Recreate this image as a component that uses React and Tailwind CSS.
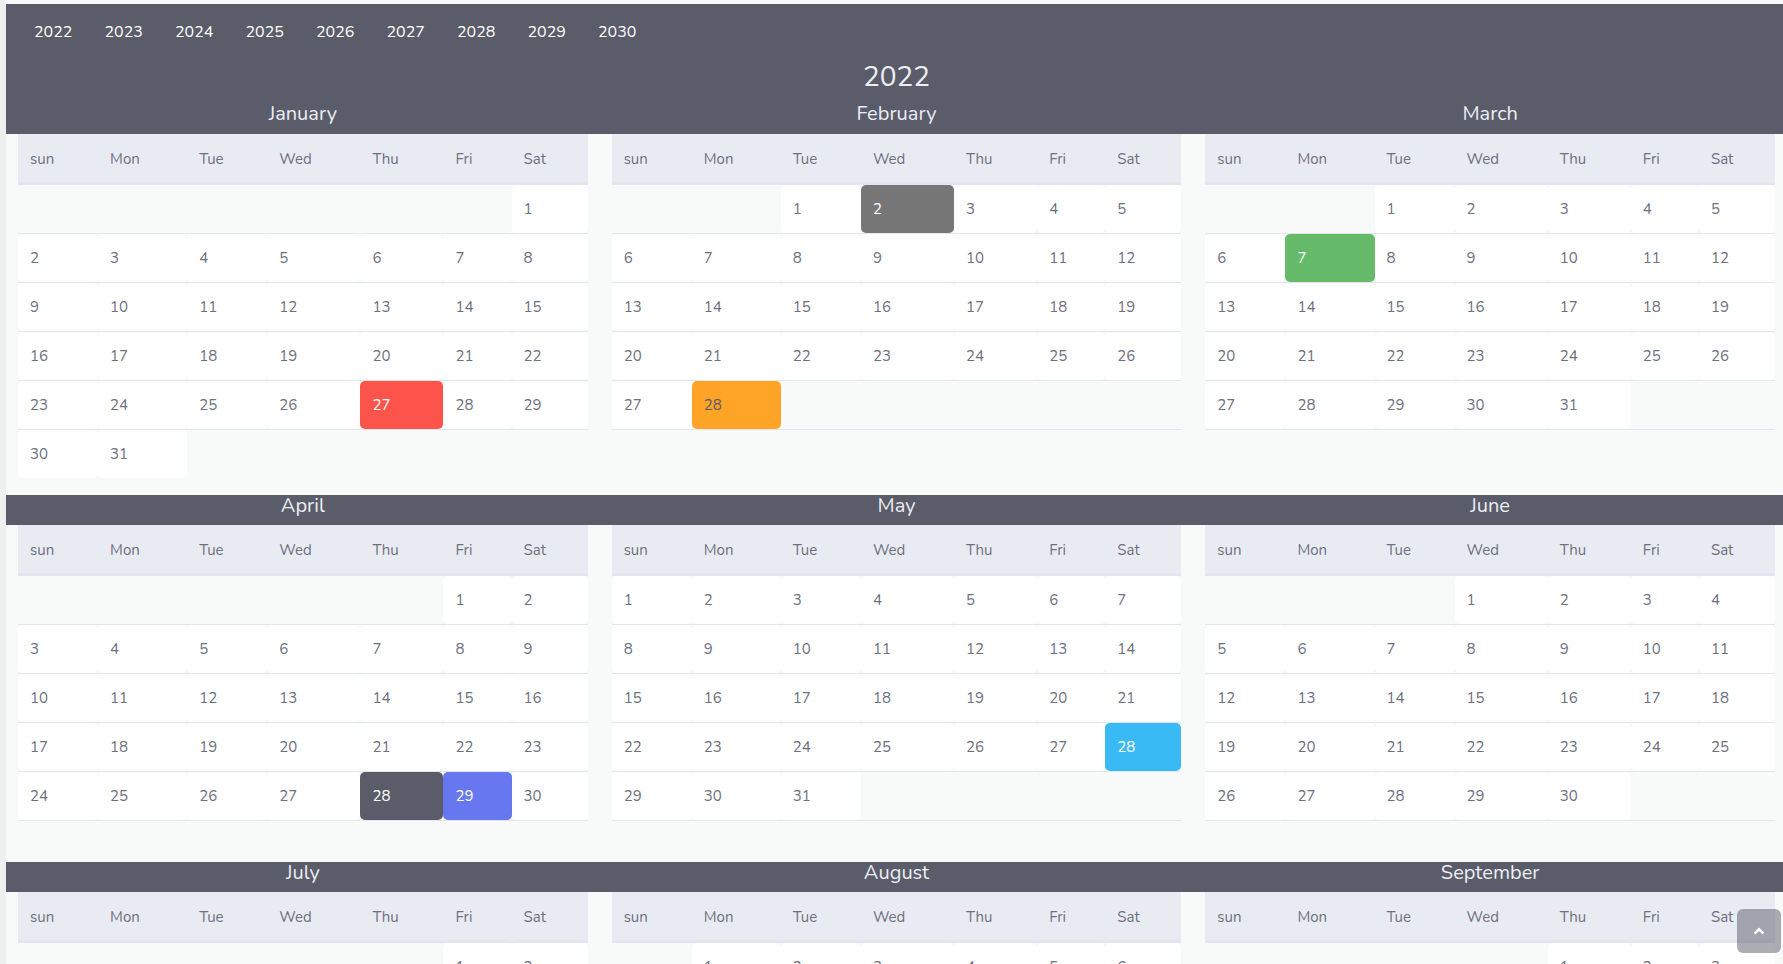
import React from "react";
import { FaAngleUp } from "react-icons/fa";

const MONTHS = [
  "January", "February", "March", "April", "May", "June",
  "July", "August", "September", "October", "November", "December",
];
const DAYS = ["sun", "Mon", "Tue", "Wed", "Thu", "Fri", "Sat"];
const YEARS = [2022, 2023, 2024, 2025, 2026, 2027, 2028, 2029, 2030];

const HL = {
  "0-27": "bg-[#fc544b] text-white",
  "1-2": "bg-[#777777] text-white",
  "1-28": "bg-[#ffa426] text-[#5a5c69]",
  "2-7": "bg-[#66bb6a] text-white",
  "3-28": "bg-[#5a5c69] text-white",
  "3-29": "bg-[#6777ef] text-white",
  "4-28": "bg-[#3abaf4] text-white",
};

const COLS = "grid grid-cols-[80fr_89fr_80fr_93fr_83fr_68fr_76fr]";

function weeksOf(m) {
  const first = new Date(2022, m, 1).getDay();
  const n = new Date(2022, m + 1, 0).getDate();
  const cells = [];
  for (let i = 0; i < first; i++) cells.push(null);
  for (let d = 1; d <= n; d++) cells.push(d);
  while (cells.length % 7) cells.push(null);
  const rows = [];
  for (let i = 0; i < cells.length; i += 7) rows.push(cells.slice(i, i + 7));
  while (rows.length < 6) rows.push(null);
  return rows;
}

function MonthTable({ m }) {
  const rows = weeksOf(m);
  return (
    <div className="px-3">
      <div className={`${COLS} bg-[#e9ebf3] border-b-2 border-[#e3e6f0]`}>
        {DAYS.map((d) => (
          <div key={d} className="px-3 pt-[13px] pb-[11px] leading-6 text-[15px] text-[#6e707e]">
            {d}
          </div>
        ))}
      </div>
      {rows.map((r, i) =>
        r ? (
          <div key={i} className={`${COLS} border-t border-[#e3e6f0]`}>
            {r.map((d, j) =>
              d ? (
                <div
                  key={j}
                  className={`px-3 py-3 leading-6 text-[15px] rounded-[5px] ${
                    HL[`${m}-${d}`] || "bg-white text-[#6e707e]"
                  }`}
                >
                  {d}
                </div>
              ) : (
                <div key={j} className="px-3 py-3 leading-6 text-[15px]">
                  &nbsp;
                </div>
              )
            )}
          </div>
        ) : (
          <div key={i} className="h-[25px] border-t border-[#e3e6f0]" />
        )
      )}
    </div>
  );
}

function Titles({ row, first }) {
  return (
    <div className={`grid grid-cols-3 ${first ? "h-[39px] pt-[8px]" : "h-[30px] bg-[#5a5c69]"}`}>
      {[0, 1, 2].map((k) => (
        <div key={k} className="text-center text-[20px] leading-[22px] text-[#eceef4]">
          {MONTHS[row * 3 + k]}
        </div>
      ))}
    </div>
  );
}

export default function App() {
  return (
    <div
      className="min-h-screen flex bg-[#f8fafa] overflow-hidden"
      style={{ fontFamily: '"Nunito", "Lato", "Noto Sans", sans-serif' }}
    >
      <div className="w-[6px] shrink-0 bg-[#eef0f0]" />
      <div className="w-[1781px] shrink-0 pt-[4px]">
        <div className="bg-[#5a5c69]">
          <div className="h-[55px] flex items-center pl-[28px]">
            {YEARS.map((y) => (
              <a key={y} className="w-[70.5px] text-[16px] text-white cursor-pointer">
                {y}
              </a>
            ))}
          </div>
          <div className="h-[36px] leading-[36px] text-center text-[28px] text-[#eceef4]">2022</div>
          <Titles row={0} first />
        </div>
        {[0, 1, 2, 3].map((row) => (
          <div key={row}>
            {row > 0 && <Titles row={row} />}
            <div className="grid grid-cols-3 items-start mb-[17px]">
              {[0, 1, 2].map((k) => (
                <MonthTable key={k} m={row * 3 + k} />
              ))}
            </div>
          </div>
        ))}
      </div>
      <button className="fixed right-[2px] bottom-[11px] w-[44px] h-[44px] rounded-[6px] bg-[#5a5c69]/50 flex items-center justify-center text-white">
        <FaAngleUp className="w-[16px] h-[16px]" />
      </button>
    </div>
  );
}
